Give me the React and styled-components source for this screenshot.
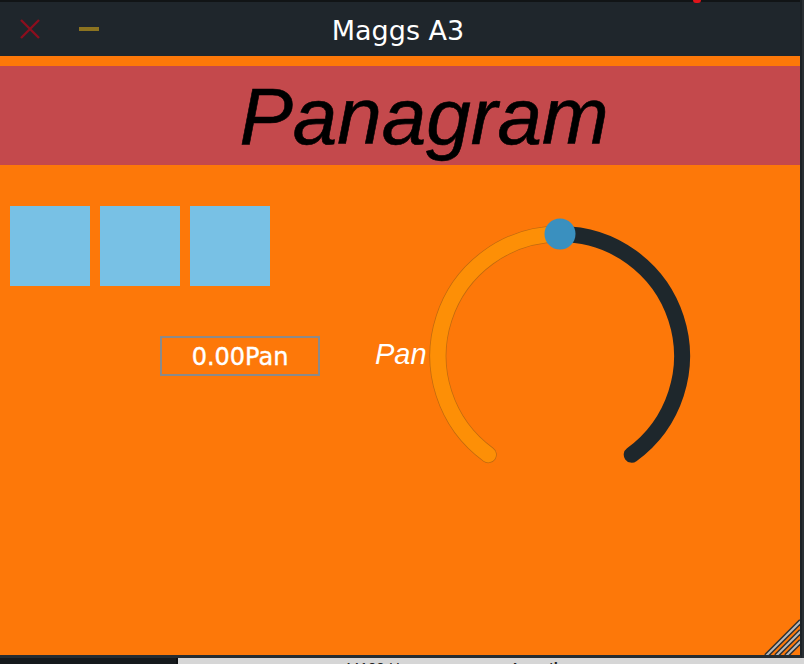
import React from 'react';
import styled, { createGlobalStyle } from 'styled-components';

const GlobalStyle = createGlobalStyle`
  html, body {
    margin: 0;
    padding: 0;
    width: 804px;
    height: 664px;
    overflow: hidden;
    background: #2a2f33;
  }
  * { box-sizing: border-box; }
`;

const ORANGE = '#fd7809';

const Desktop = styled.div`
  width: 804px;
  height: 664px;
  display: flex;
  flex-direction: column;
  overflow: hidden;
`;

const Window = styled.div`
  position: relative;
  width: 802px;
  height: 658px;
  display: flex;
  flex-direction: column;
  background: ${ORANGE};
  border-right: 2px solid #1c2226;
  border-bottom: 3px solid #252c31;
`;

const TitleBar = styled.div`
  position: relative;
  height: 56px;
  flex: none;
  display: flex;
  align-items: center;
  justify-content: center;
  background: #1f262c;
  border-top: 2px solid #111416;
`;

const RedMark = styled.span`
  position: absolute;
  top: -2px;
  left: 693px;
  width: 8px;
  height: 3px;
  border-radius: 0 0 3px 3px;
  background: #e0141a;
`;

const Controls = styled.div`
  position: absolute;
  left: 20px;
  top: 0;
  bottom: 0;
  display: flex;
  align-items: center;
  gap: 39px;
`;

const Title = styled.div`
  font-family: 'DejaVu Sans', 'Noto Sans', sans-serif;
  font-size: 27px;
  color: #ffffff;
  margin-left: -4px;
  margin-top: 2px;
`;

const Strip = styled.div`
  height: 10px;
  flex: none;
  background: ${ORANGE};
`;

const Banner = styled.div`
  height: 99px;
  flex: none;
  display: flex;
  align-items: center;
  justify-content: center;
  padding-left: 48px;
  background: #c4494c;
`;

const BannerText = styled.h1`
  margin: 0;
  font-family: 'Liberation Sans', Arial, sans-serif;
  font-style: italic;
  font-weight: 400;
  font-size: 80px;
  line-height: 1;
  color: #000;
  margin-top: 2px;
  -webkit-text-stroke: 0.6px #000;
`;

const Body = styled.div`
  flex: 1;
  display: flex;
  align-items: flex-start;
`;

const LeftColumn = styled.div`
  width: 360px;
  flex: none;
  padding: 41px 0 0 10px;
  display: flex;
  flex-direction: column;
  align-items: flex-start;
`;

const Squares = styled.div`
  display: flex;
  gap: 10px;
`;

const Square = styled.div`
  width: 80px;
  height: 80px;
  background: #78c1e5;
`;

const ValueBox = styled.div`
  margin: 50px 0 0 150px;
  width: 160px;
  height: 40px;
  border: 2px solid #8a8a8a;
  display: flex;
  align-items: center;
  justify-content: center;
  font-family: 'DejaVu Sans', 'Noto Sans', sans-serif;
  font-size: 24px;
  color: #fff;
  padding-top: 1px;
  -webkit-text-stroke: 0.4px #fff;
`;

const KnobGroup = styled.div`
  margin-top: 50px;
  display: flex;
  align-items: flex-start;
`;

const KnobLabel = styled.div`
  width: 68px;
  padding-left: 15px;
  margin-top: ${p => p.$offset}px;
  font-family: 'Liberation Sans', Arial, sans-serif;
  font-style: italic;
  font-size: 29px;
  line-height: 34px;
  color: #fff;
`;

const Grip = styled.svg`
  position: absolute;
  right: 0;
  bottom: 0;
`;

const HostBar = styled.div`
  flex: 1;
  display: flex;
  overflow: hidden;
`;

const HostDark = styled.div`
  width: 178px;
  background: #15191c;
  border-right: 2px solid #0c0f11;
`;

const HostLight = styled.div`
  flex: 1;
  position: relative;
  background: #d6d6d6;
  font-family: 'Liberation Sans', Arial, sans-serif;
  font-size: 15px;
  color: #222;
  white-space: nowrap;
`;

const HostText = styled.span`
  position: absolute;
  top: 1px;
  left: ${p => p.$x}px;
  font-weight: ${p => (p.$bold ? 700 : 400)};
`;

const polar = (cx, cy, r, deg) => {
  const a = (deg * Math.PI) / 180;
  return [cx + r * Math.cos(a), cy + r * Math.sin(a)];
};

const Knob = ({ value = 0.5 }) => {
  const cx = 132;
  const cy = 141;
  const r = 122;
  const start = 126;
  const end = 414;
  const pos = start + (end - start) * value;
  const [sx, sy] = polar(cx, cy, r, start);
  const [px, py] = polar(cx, cy, r, pos);
  const [ex, ey] = polar(cx, cy, r, end);
  const bigFill = pos - start > 180 ? 1 : 0;
  const bigRest = end - pos > 180 ? 1 : 0;
  return (
    <svg width="264" height="252" viewBox="0 0 264 252">
      <path
        d={`M ${px} ${py} A ${r} ${r} 0 ${bigRest} 1 ${ex} ${ey}`}
        fill="none"
        stroke="#1e272c"
        strokeWidth="16"
        strokeLinecap="round"
      />
      <path
        d={`M ${sx} ${sy} A ${r} ${r} 0 ${bigFill} 1 ${px} ${py}`}
        fill="none"
        stroke="#c06a10"
        strokeWidth="17"
        strokeLinecap="round"
      />
      <path
        d={`M ${sx} ${sy} A ${r} ${r} 0 ${bigFill} 1 ${px} ${py}`}
        fill="none"
        stroke="#fd8f06"
        strokeWidth="15.5"
        strokeLinecap="round"
      />
      <circle cx={px} cy={py} r="15.5" fill="#3a90bf" />
    </svg>
  );
};

export default function App() {
  return (
    <>
      <GlobalStyle />
      <Desktop>
        <Window>
          <TitleBar>
            <RedMark />
            <Controls>
              <svg width="20" height="20" viewBox="0 0 20 20">
                <path d="M1 1 L19 19 M19 1 L1 19" stroke="#8b0f1e" strokeWidth="2.4" />
              </svg>
              <svg width="20" height="6" viewBox="0 0 20 6">
                <rect x="0" y="1" width="20" height="4" fill="#8b7320" />
              </svg>
            </Controls>
            <Title>Maggs A3</Title>
          </TitleBar>
          <Strip />
          <Banner>
            <BannerText>Panagram</BannerText>
          </Banner>
          <Body>
            <LeftColumn>
              <Squares>
                <Square />
                <Square />
                <Square />
              </Squares>
              <ValueBox>0.00Pan</ValueBox>
            </LeftColumn>
            <KnobGroup>
              <KnobLabel $offset={122}>Pan</KnobLabel>
              <Knob value={0.5} />
            </KnobGroup>
          </Body>
          <Grip width="36" height="36" viewBox="0 0 36 36">
            {[0, 10, 20].map(o => (
              <g key={o}>
                <path d={`M${o + 2} 37 L37 ${o + 2}`} stroke="#2a2f33" strokeWidth="5" />
                <path d={`M${o + 2} 37 L37 ${o + 2}`} stroke="#b9b9b9" strokeWidth="2" />
              </g>
            ))}
          </Grip>
        </Window>
        <HostBar>
          <HostDark />
          <HostLight>
            <HostText $x={165}>44100 Hz</HostText>
            <HostText $x={335} $bold>Length</HostText>
          </HostLight>
        </HostBar>
      </Desktop>
    </>
  );
}
